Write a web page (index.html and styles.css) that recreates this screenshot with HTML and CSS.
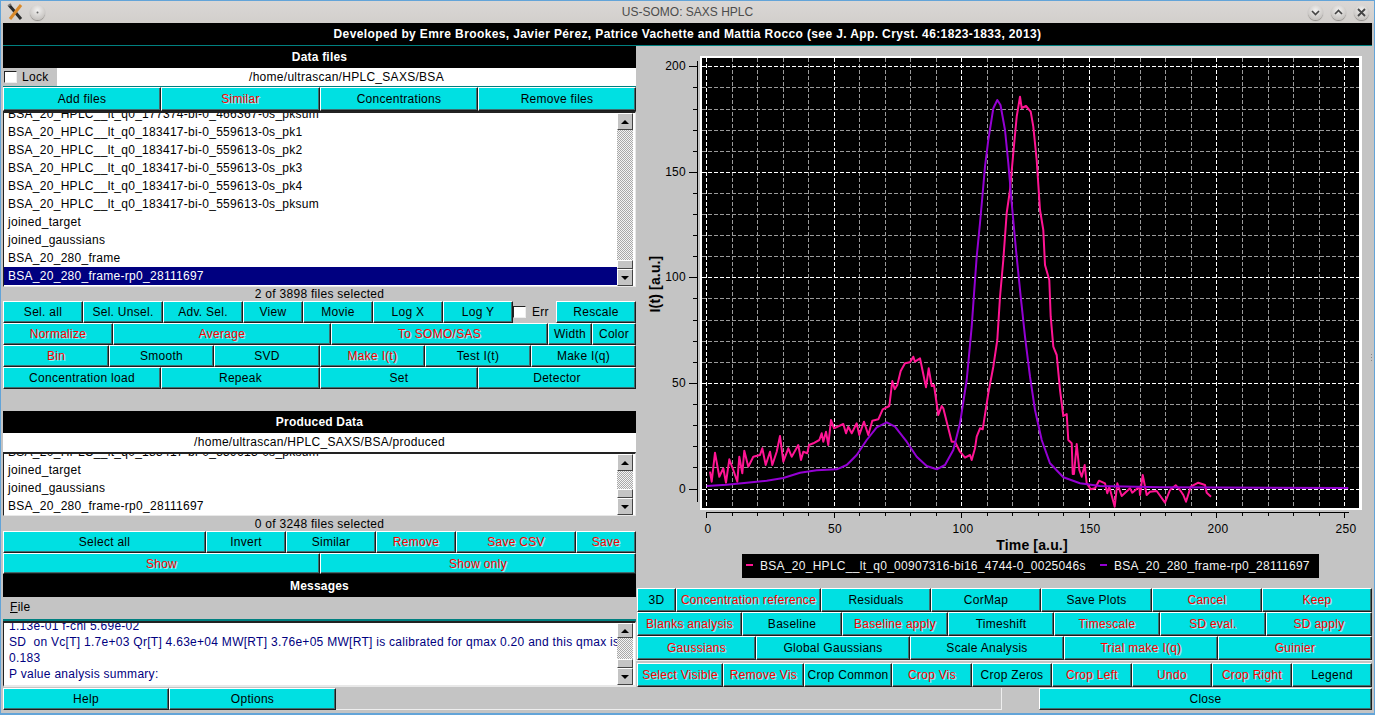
FILE: index.html
```html
<!DOCTYPE html>
<html lang="en">
<head>
<meta charset="utf-8">
<title>US-SOMO: SAXS HPLC</title>
<link rel="stylesheet" href="styles.css">
</head>
<body>
<div class="window">
  <header class="titlebar">
    <div class="tb-left">
      <svg class="app-icon" width="16" height="18" viewBox="0 0 16 18"><path d="M2 2 L14 16" stroke="#2a2a2a" stroke-width="3"/><path d="M14 2 L3 16" stroke="#d98a2b" stroke-width="3"/><path d="M1 3 L4 1" stroke="#777" stroke-width="2"/></svg>
      <span class="round"><svg width="15" height="15" viewBox="0 0 15 15"><circle cx="7.5" cy="7.5" r="1" fill="#666"/></svg></span>
    </div>
    <div class="title">US-SOMO: SAXS HPLC</div>
    <div class="tb-right">
      <span class="round"><svg width="15" height="15" viewBox="0 0 15 15"><path d="M4 6 L7.5 9.5 L11 6" fill="none" stroke="#444" stroke-width="1.6"/></svg></span>
      <span class="round"><svg width="15" height="15" viewBox="0 0 15 15"><path d="M4 9 L7.5 5.5 L11 9" fill="none" stroke="#444" stroke-width="1.6"/></svg></span>
      <span class="round"><svg width="15" height="15" viewBox="0 0 15 15"><path d="M4 4 L11 11 M11 4 L4 11" fill="none" stroke="#444" stroke-width="1.8"/></svg></span>
    </div>
  </header>
  <div class="banner">Developed by Emre Brookes, Javier Pérez, Patrice Vachette and Mattia Rocco (see J. App. Cryst. 46:1823-1833, 2013)</div>

  <main class="main">
    <section class="left">
      <div class="hdr">Data files</div>
      <div class="pathrow teal-b">
        <label class="lock"><span class="check"></span><span>Lock</span></label>
        <div class="path">/home/ultrascan/HPLC_SAXS/BSA</div>
      </div>
      <div class="row r-four tall">
        <button>Add files</button><button class="red">Similar</button><button>Concentrations</button><button>Remove files</button>
      </div>
      <div class="list list-data">
        <div class="items">
          <div class="item">BSA_20_HPLC__lt_q0_177374-bi-0_466367-0s_pksum</div>
          <div class="item">BSA_20_HPLC__lt_q0_183417-bi-0_559613-0s_pk1</div>
          <div class="item">BSA_20_HPLC__lt_q0_183417-bi-0_559613-0s_pk2</div>
          <div class="item">BSA_20_HPLC__lt_q0_183417-bi-0_559613-0s_pk3</div>
          <div class="item">BSA_20_HPLC__lt_q0_183417-bi-0_559613-0s_pk4</div>
          <div class="item">BSA_20_HPLC__lt_q0_183417-bi-0_559613-0s_pksum</div>
          <div class="item">joined_target</div>
          <div class="item">joined_gaussians</div>
          <div class="item">BSA_20_280_frame</div>
          <div class="item sel">BSA_20_280_frame-rp0_28111697</div>
        </div>
        <div class="sb">
          <span class="sb-btn"><i class="up"></i></span><span class="trough"></span><span class="thumb"></span><span class="sb-btn"><i class="down"></i></span>
        </div>
      </div>
      <div class="status s-data">2 of 3898 files selected</div>
      <div class="row r-sel">
        <button>Sel. all</button><button>Sel. Unsel.</button><button>Adv. Sel.</button><button>View</button><button>Movie</button><button>Log X</button><button>Log Y</button>
        <label class="err"><span class="check"></span><span>Err</span></label>
        <button>Rescale</button>
      </div>
      <div class="row r-norm">
        <button class="red">Normalize</button><button class="red">Average</button><button class="red">To SOMO/SAS</button><button>Width</button><button>Color</button>
      </div>
      <div class="row r-six">
        <button class="red">Bin</button><button>Smooth</button><button>SVD</button><button class="red">Make I(t)</button><button>Test I(t)</button><button>Make I(q)</button>
      </div>
      <div class="row r-four">
        <button>Concentration load</button><button>Repeak</button><button>Set</button><button>Detector</button>
      </div>
      <div class="spacer"></div>
      <div class="hdr">Produced Data</div>
      <div class="pathrow prod-path"><div class="path">/home/ultrascan/HPLC_SAXS/BSA/produced</div></div>
      <div class="list list-prod">
        <div class="items">
          <div class="item">BSA_20_HPLC__lt_q0_183417-bi-0_559613-0s_pksum</div>
          <div class="item">joined_target</div>
          <div class="item">joined_gaussians</div>
          <div class="item">BSA_20_280_frame-rp0_28111697</div>
        </div>
        <div class="sb">
          <span class="sb-btn"><i class="up"></i></span><span class="trough"></span><span class="thumb"></span><span class="sb-btn"><i class="down"></i></span>
        </div>
      </div>
      <div class="status s-prod">0 of 3248 files selected</div>
      <div class="row r-prod">
        <button>Select all</button><button>Invert</button><button>Similar</button><button class="red">Remove</button><button class="red">Save CSV</button><button class="red">Save</button>
      </div>
      <div class="row r-show">
        <button class="red">Show</button><button class="red">Show only</button>
      </div>
      <div class="hdr hdr-msg">Messages</div>
      <div class="menu"><span><u>F</u>ile</span></div>
      <div class="list list-msg">
        <div class="msg">
          <div class="msg-line">1.13e-01 f-chi 5.69e-02</div>
          <div class="msg-line">SD&nbsp; on Vc[T] 1.7e+03 Qr[T] 4.63e+04 MW[RT] 3.76e+05 MW[RT] is calibrated for qmax 0.20 and this qmax is</div>
          <div class="msg-line">0.183</div>
          <div class="msg-line">P value analysis summary:</div>
        </div>
        <div class="sb">
          <span class="sb-btn sb-short"><i class="up"></i></span><span class="trough"></span><span class="thumb"></span><span class="sb-btn"><i class="down"></i></span>
        </div>
      </div>
    </section>

    <section class="right">
      <svg class="plot" width="736" height="542" viewBox="636 46 736 542">
        <rect x="700" y="56" width="662" height="454" fill="#fff"/>
        <rect x="702" y="58" width="657" height="450" fill="#000"/>
        <path class="grid-minor" d="M732.5 58V508M757.5 58V508M783.5 58V508M808.5 58V508M859.5 58V508M885.5 58V508M910.5 58V508M936.5 58V508M987.5 58V508M1012.5 58V508M1038.5 58V508M1063.5 58V508M1114.5 58V508M1140.5 58V508M1165.5 58V508M1191.5 58V508M1242.5 58V508M1268.5 58V508M1293.5 58V508M1319.5 58V508M702 87.5H1359M702 109.5H1359M702 130.5H1359M702 151.5H1359M702 193.5H1359M702 214.5H1359M702 235.5H1359M702 256.5H1359M702 298.5H1359M702 320.5H1359M702 341.5H1359M702 362.5H1359M702 404.5H1359M702 425.5H1359M702 446.5H1359M702 467.5H1359"/>
        <path class="grid-major" d="M706.5 58V508M834.5 58V508M961.5 58V508M1089.5 58V508M1216.5 58V508M1344.5 58V508M702 66.5H1359M702 172.5H1359M702 277.5H1359M702 383.5H1359M702 489.5H1359"/>
        <polyline class="pink" points="710,471.7 711.7,481.7 715,452.7 719.3,476.7 723.3,468.3 726,482.7 729.3,459.3 733.3,470 737.3,481.7 739.3,456.7 742.3,473.3 744.3,450.7 748.3,466.7 753.3,456.7 760,455 762.3,448.3 765.7,465 770,451.7 772.3,465 776.7,451.7 780,436 783.3,461.7 788.3,448.3 791.7,456.7 798.3,445 801,460 803.3,451.7 807.3,453.3 809,445 813.3,443.3 819.3,440 821.7,433.3 823.3,441.7 826,431.7 828.3,445 831,420 834,428.3 843.3,424 846,433.3 848.3,426.7 851.7,433.3 856.7,423.3 859.3,435 864,421.7 868.3,435 872.3,420.7 878.3,419.3 882.7,409.3 889.3,406 892.3,381 894.7,389.3 897.3,385 900.7,371 905,363.3 910,362.3 913.3,356.7 915,361.7 920,358.3 926,387.3 928.7,368.3 931.7,386 934,385 938.3,415 941.7,406 943.3,408.3 951.7,441.7 955,441.7 960,451.7 965,457.7 970,455 971.7,460 975,448.3 976.7,436.7 980,428.3 982.7,429.3 988.3,393.3 993.3,366.7 997.3,340 1000,297 1003.3,260 1006.7,213 1010,190 1013.3,153 1016.7,116.7 1020,96.7 1021.7,108 1026,106 1030.7,111.7 1033.3,126.7 1036.7,160 1040,210 1043.3,230 1045,265 1049.3,280 1050.7,316.7 1053.3,346.7 1056.7,355 1060,390 1063.3,416 1066.7,414 1068.3,440 1071.7,443.3 1072.7,474 1074,474 1076.7,444 1079.3,470 1081.7,476.7 1084.7,465 1086.7,483.3 1090.7,489.3 1095,488.3 1099,480.7 1105,483.3 1107.3,493.3 1109.3,486.7 1114.7,506.7 1117.3,483.3 1121.7,496 1130,488.3 1132.3,492.7 1139.3,486.7 1140,495 1142.7,475 1146.7,495 1150,491.7 1156.7,491 1165,502.7 1170,490 1175.7,485.3 1180,490 1183.3,495 1186,501.7 1190.7,486.7 1198.3,482.7 1205,485 1206.7,492.7 1211,496.7"/>
        <polyline class="purple" points="706.7,486 726.7,484.7 746.7,482.7 766.7,480.7 783.3,478 800,472.7 816.7,470.3 836.7,469.3 846.7,465 856.7,455 866.7,440 876.7,427.3 886.7,422.3 895,426.7 906.7,441.7 916.7,456.7 926.7,466 936.7,469.3 945,465 953.3,450 960,423.3 966.7,380 971.7,326.7 975,280 976.7,256.7 980,223 982.7,193 985,166.7 988.3,140 993.3,108.3 997.3,100 1000.5,105 1005,130 1008.3,163 1011.7,203 1016,250 1020.7,296.7 1025,336.7 1030,376.7 1035,410 1041.7,440 1050,463.3 1063.3,477.3 1080,483.3 1100,486 1160,487.3 1348.3,488"/>
        <path class="axis" d="M697.5 61V502M689 66.5H698M693 87.5H698M693 109.5H698M693 130.5H698M693 151.5H698M689 172.5H698M693 193.5H698M693 214.5H698M693 235.5H698M693 256.5H698M689 277.5H698M693 298.5H698M693 320.5H698M693 341.5H698M693 362.5H698M689 383.5H698M693 404.5H698M693 425.5H698M693 446.5H698M693 467.5H698M689 489.5H698M706 512.5H1349M706.5 512V518M732.5 512V516M757.5 512V516M783.5 512V516M808.5 512V516M834.5 512V518M859.5 512V516M885.5 512V516M910.5 512V516M936.5 512V516M961.5 512V518M987.5 512V516M1012.5 512V516M1038.5 512V516M1063.5 512V516M1089.5 512V518M1114.5 512V516M1140.5 512V516M1165.5 512V516M1191.5 512V516M1216.5 512V518M1242.5 512V516M1268.5 512V516M1293.5 512V516M1319.5 512V516M1344.5 512V518"/>
        <g class="ylab">
          <text x="686" y="70">200</text><text x="686" y="176">150</text><text x="686" y="281">100</text><text x="686" y="387">50</text><text x="686" y="493">0</text>
        </g>
        <g class="xlab">
          <text x="708" y="533">0</text><text x="835" y="533">50</text><text x="963" y="533">100</text><text x="1090" y="533">150</text><text x="1218" y="533">200</text><text x="1346" y="533">250</text>
        </g>
        <text class="ytitle" transform="translate(660 284) rotate(-90)">I(t) [a.u.]</text>
        <text class="xtitle" x="1032" y="550">Time [a.u.]</text>
        <rect x="742" y="554" width="577" height="24" fill="#000"/>
        <rect x="746" y="564" width="7" height="2" fill="#ff1493"/>
        <text class="leg" x="760" y="570">BSA_20_HPLC__lt_q0_00907316-bi16_4744-0_0025046s</text>
        <rect x="1100" y="564" width="7" height="2" fill="#9400d3"/>
        <text class="leg" x="1114" y="570">BSA_20_280_frame-rp0_28111697</text>
        <path d="M1371.5 354v1M1371.5 357v1M1371.5 360v1" stroke="#888"/>
      </svg>
      <div class="row rr r1">
        <button>3D</button><button class="red">Concentration reference</button><button>Residuals</button><button>CorMap</button><button>Save Plots</button><button class="red">Cancel</button><button class="red">Keep</button>
      </div>
      <div class="row rr r2">
        <button class="red">Blanks analysis</button><button>Baseline</button><button class="red">Baseline apply</button><button>Timeshift</button><button class="red">Timescale</button><button class="red">SD eval.</button><button class="red">SD apply</button>
      </div>
      <div class="row rr r3">
        <button class="red">Gaussians</button><button>Global Gaussians</button><button>Scale Analysis</button><button class="red">Trial make I(q)</button><button class="red">Guinier</button>
      </div>
      <div class="divider"></div>
      <div class="row rr r4">
        <button class="red">Select Visible</button><button class="red">Remove Vis</button><button>Crop Common</button><button class="red">Crop Vis</button><button>Crop Zeros</button><button class="red">Crop Left</button><button class="red">Undo</button><button class="red">Crop Right</button><button>Legend</button>
      </div>
    </section>
  </main>

  <footer class="footer">
    <button>Help</button><button>Options</button><div class="progress"></div><div class="blank"></div><button>Close</button>
  </footer>
</div>
</body>
</html>
```

FILE: styles.css
```css
* { box-sizing: border-box; }
html, body { margin: 0; padding: 0; }
body {
  width: 1375px;
  height: 715px;
  overflow: hidden;
  background: #c4c4c4;
  font-family: "Liberation Sans", Arial, sans-serif;
  font-size: 12px;
  letter-spacing: .28px;
  color: #000;
}
.window {
  width: 1375px;
  height: 715px;
  display: flex;
  flex-direction: column;
  border: 1px solid #63a4d8;
  border-bottom-width: 2px;
  padding: 0 2px;
  background: #c4c4c4;
}
.titlebar {
  height: 22px;
  margin: 0 -2px;
  padding: 0 2px;
  display: flex;
  align-items: center;
  background: linear-gradient(#dad7d5, #d2cfcc);
}
.tb-left, .tb-right { width: 100px; display: flex; align-items: center; }
.tb-left { gap: 7px; padding-left: 4px; }
.tb-right { justify-content: flex-end; gap: 8px; padding-right: 3px; }
.title { flex: 1; text-align: center; color: #4c4c4c; font-size: 12px; letter-spacing: 0; }
.round {
  width: 15px;
  height: 15px;
  border-radius: 50%;
  background: radial-gradient(circle at 50% 35%, #f2f1f0, #c6c3c0 75%, #a5a2a0);
  box-shadow: 0 1px 1px #8e8b88;
  display: block;
}
.round svg { display: block; }
.app-icon { display: block; }
.banner {
  height: 23px;
  line-height: 22px;
  background: #000;
  color: #fff;
  text-align: center;
  font-weight: bold;
  letter-spacing: .38px;
  border-bottom: 1px solid #008080;
}
.main { display: flex; height: 642px; }
.left { width: 633px; display: flex; flex-direction: column; }
.right { width: 736px; display: flex; flex-direction: column; }
.hdr {
  height: 22px;
  line-height: 22px;
  background: #000;
  color: #fff;
  font-weight: bold;
  letter-spacing: .2px;
  text-align: center;
}
.hdr-msg { height: 23px; line-height: 24px; }
.pathrow { height: 18px; display: flex; background: #fff; }
.teal-b { height: 19px; border-bottom: 1px solid #008080; }
.prod-path { height: 19px; }
.path { flex: 1; text-align: center; line-height: 18px; }
.lock {
  width: 54px;
  background: #c4c4c4;
  display: flex;
  align-items: center;
  gap: 5px;
  padding-left: 1px;
}
.check {
  width: 13px;
  height: 12px;
  display: block;
  background: #fff;
  border: 1px solid;
  border-color: #222 #eee #eee #222;
}
.row { display: grid; height: 22px; }
.tall { height: 24px; }
.row button, .footer button {
  margin: 0;
  padding: 0;
  min-width: 0;
  font: inherit;
  letter-spacing: inherit;
  color: #000;
  background: #00e0e2;
  border: 1px solid;
  border-color: #fff #1c1c1c #1c1c1c #fff;
  box-shadow: inset -1px -1px 0 #3d6f70;
  white-space: nowrap;
  overflow: hidden;
}
.row button.red { color: #f00; text-shadow: 1px 1px 0 rgba(255,255,255,.6); }
.r-four { grid-template-columns: 158px 159px 158px 158px; }
.r-sel { grid-template-columns: 80px 80px 80px 60px 70px 70px 70px 43px 80px; }
.r-norm { grid-template-columns: 110px 218px 217px 44px 44px; }
.r-six { grid-template-columns: 106px 105px 106px 105px 106px 105px; }
.r-prod { grid-template-columns: 203px 80px 90px 80px 120px 60px; }
.r-show { grid-template-columns: 317px 316px; height: 21px; }
.err { display: flex; align-items: center; gap: 6px; }
.list {
  display: flex;
  background: #fff;
  border: 1px solid;
  border-width: 2px 1px 1px 1px;
  border-color: #222 #e8e8e8 #e8e8e8 #222;
  overflow: hidden;
}
.list-data { height: 176px; }
.list-prod { height: 64px; }
.list-msg { height: 66px; border-bottom: 2px solid #e8e8e8; }
.items, .msg { flex: 1; min-width: 0; overflow: hidden; }
.item { height: 18px; line-height: 18px; padding-left: 4px; white-space: nowrap; }
.list-data .item:first-child { margin-top: -8px; }
.list-prod .item:first-child { margin-top: -11px; }
.sel { background: #000080; color: #fff; }
.msg { color: #000080; }
.msg-line { height: 16px; line-height: 16px; padding-left: 5px; white-space: nowrap; }
.msg-line:first-child { margin-top: -5px; }
.sb { width: 16px; margin-right: 2px; flex: none; display: flex; flex-direction: column; }
.sb-btn {
  height: 17px;
  flex: none;
  display: flex;
  align-items: center;
  justify-content: center;
  background: #c4c4c4;
  border: 1px solid;
  border-color: #fff #444 #444 #fff;
}
.sb-short { height: 15px; }
.up, .down { width: 0; height: 0; border-left: 4px solid transparent; border-right: 4px solid transparent; }
.up { border-bottom: 4px solid #000; }
.down { border-top: 4px solid #000; }
.trough { flex: 1; background: repeating-conic-gradient(#a8a8a8 0 25%, #f4f4f4 0 50%) 0 0 / 2px 2px; }
.thumb { height: 9px; flex: none; background: #c4c4c4; border: 1px solid; border-color: #fff #444 #444 #fff; }
.status { text-align: center; line-height: 14px; }
.s-data { height: 14px; }
.s-prod { height: 15px; line-height: 16px; }
.spacer { height: 22px; }
.menu { height: 24px; padding-left: 7px; line-height: 21px; border-bottom: 2px solid #008080; }
.plot { display: block; }
.grid-minor { fill: none; stroke: #9a9a9a; stroke-width: 1; stroke-dasharray: 4 2; shape-rendering: crispEdges; }
.grid-major { fill: none; stroke: #fff; stroke-width: 1; stroke-dasharray: 4 2; shape-rendering: crispEdges; }
.axis { fill: none; stroke: #000; stroke-width: 1; shape-rendering: crispEdges; }
.pink { fill: none; stroke: #ff1493; stroke-width: 2; stroke-linejoin: round; }
.purple { fill: none; stroke: #9400d3; stroke-width: 2; stroke-linejoin: round; }
.ylab text { text-anchor: end; font-size: 12px; }
.xlab text { text-anchor: middle; font-size: 12px; }
.ytitle, .xtitle { font-size: 14px; font-weight: bold; text-anchor: middle; letter-spacing: .15px; }
.leg { fill: #f2f2f2; font-size: 12px; }
.rr { height: 24px; margin-left: 1px; }
.r1 { grid-template-columns: 39px 145px 110px 110px 111px 110px 110px; }
.r2 { grid-template-columns: 105px 100px 106px 106px 106px 106px 106px; }
.r3 { grid-template-columns: 119px 154px 154px 154px 154px; }
.r4 { grid-template-columns: 86px 81px 88px 80px 80px 80px 80px 80px 80px; }
.divider { height: 3px; border-top: 1px solid #f0f0f0; }
.footer { display: grid; grid-template-columns: 166px 167px 666px 37px 333px; height: 22px; }
.progress { border-right: 1px solid #eee; border-bottom: 1px solid #eee; }
.blank { background: #c4c4c4; }
```
